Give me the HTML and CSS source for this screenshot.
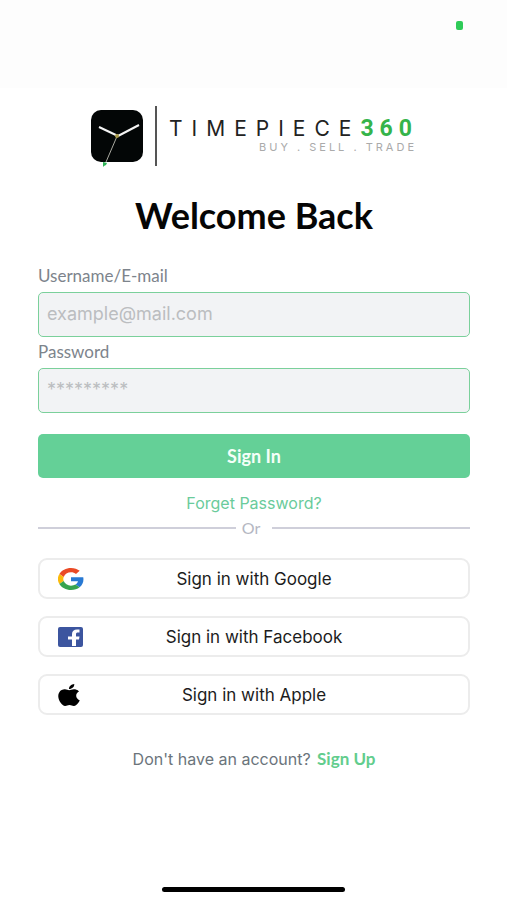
FILE: index.html
```html
<!DOCTYPE html>
<html lang="en">
<head>
<meta charset="utf-8">
<meta name="viewport" content="width=device-width, initial-scale=1">
<title>Timepiece360 – Sign In</title>
<link rel="stylesheet" href="styles.css">
</head>
<body>
<div class="status-bar"><span class="camera-dot"></span></div>
<main class="page">
  <div class="brand">
    <svg class="brand-mark" viewBox="0 0 54 62" aria-hidden="true">
      <rect x="1" y="5" width="52" height="52" rx="10" fill="#030606"/>
      <path d="M28 31 49 20" stroke="#f4f4f4" stroke-width="2"/>
      <path d="M28 31 9 22" stroke="#f4f4f4" stroke-width="2"/>
      <path d="M28 29 16 57" stroke="#a9a9a0" stroke-width="1"/>
      <circle cx="27" cy="31" r="2" fill="#a89a48"/>
      <path d="M13 57 17 58 16 60 14 61 13 62Z" fill="#2fb457"/>
    </svg>
    <span class="brand-rule"></span>
    <div class="brand-text">
      <div class="brand-name"><span>TIMEPIECE</span><b>360</b></div>
      <div class="brand-tag">BUY . SELL . TRADE</div>
    </div>
  </div>
  <h1 class="title">Welcome Back</h1>
  <form class="form">
    <label class="label" for="user">Username/E-mail</label>
    <input class="input" id="user" type="text" placeholder="example@mail.com">
    <label class="label" for="pass">Password</label>
    <input class="input" id="pass" type="password" placeholder="*********">
    <button class="submit" type="submit">Sign In</button>
  </form>
  <a class="forgot" href="#">Forget Password?</a>
  <div class="divider"><span>Or</span></div>
  <div class="social-list">
    <button class="social" type="button">
      <svg class="icon" viewBox="0 0 48 48" preserveAspectRatio="none" aria-hidden="true">
        <path fill="#ea4a25" d="M24 9.5c3.5 0 6.700 1.200 9.200 3.600l6.900-6.900C35.900 2.400 30.500 0 24 0 14.600 0 6.500 5.400 2.600 13.200l8 6.200C12.400 13.700 17.700 9.500 24 9.500z"/>
        <path fill="#2879d3" d="M47 24.500c0-1.600-.2-3.100-.4-4.500H24v9h12.900c-.6 3-2.200 5.500-4.700 7.200l7.700 6C44.400 38 47 31.800 47 24.500z"/>
        <path fill="#fbb90b" d="M10.500 28.600A14.500 14.500 0 0 1 10.500 19.400l-8-6.200a24 24 0 0 0 0 21.600z"/>
        <path fill="#36a34f" d="M24 48c6.500 0 11.900-2.100 15.900-5.800l-7.700-6c-2.200 1.500-4.900 2.300-8.200 2.300-6.300 0-11.600-4.200-13.500-9.900l-8 6.200C6.500 42.600 14.600 48 24 48z"/>
      </svg>
      <span>Sign in with Google</span>
    </button>
    <button class="social" type="button">
      <svg class="icon" viewBox="0 0 26 22" aria-hidden="true">
        <rect x="0" y="1" width="25" height="20" rx="2" fill="#3c559f"/>
        <path fill="#fff" d="M14 20V13.500H10V10.500H14V8C14 5 16 3.500 19 3.500H21.500V6.500H20C18.500 6.500 18 7 18 8.200V10.500H21.500L21 13.500H18V20Z"/>
      </svg>
      <span>Sign in with Facebook</span>
    </button>
    <button class="social" type="button">
      <svg class="icon icon-apple" viewBox="2 0 20 24" preserveAspectRatio="none" aria-hidden="true">
        <path d="M12.150 6.900c-.95 0-2.400-1.080-3.960-1.040-2.040.03-3.910 1.180-4.960 3.010-2.120 3.680-.55 9.100 1.520 12.090 1.010 1.450 2.210 3.090 3.790 3.040 1.520-.07 2.090-.99 3.930-.99 1.830 0 2.350.99 3.960.95 1.640-.03 2.680-1.480 3.680-2.950 1.160-1.690 1.640-3.320 1.660-3.410-.04-.01-3.180-1.220-3.220-4.860-.03-3.040 2.480-4.490 2.600-4.560-1.430-2.090-3.620-2.320-4.390-2.380-2-.16-3.680 1.090-4.610 1.090zM15.530 3.830c.84-1.010 1.400-2.430 1.250-3.830-1.210.05-2.660.8-3.530 1.820-.78.9-1.450 2.340-1.270 3.710 1.340.1 2.720-.69 3.560-1.700"/>
      </svg>
      <span>Sign in with Apple</span>
    </button>
  </div>
  <p class="signup">Don't have an account? <a href="#">Sign Up</a></p>
</main>
<div class="home-bar"></div>
</body>
</html>
```

FILE: styles.css
```css
* {
  box-sizing: border-box;
}

body {
  margin: 0;
  min-height: 100vh;
  display: flex;
  flex-direction: column;
  background: #fff;
  color: #111;
  font-family: Lato, "Open Sans", sans-serif;
}

.status-bar {
  height: 88px;
  padding: 21px 44px;
  display: flex;
  justify-content: flex-end;
  background: #fdfdfd;
}

.camera-dot {
  width: 7px;
  height: 9px;
  border-radius: 2px;
  background: #2fcb58;
}

.page {
  flex: 1;
  display: flex;
  flex-direction: column;
  padding: 17px 37px 0 38px;
}

.brand {
  display: flex;
  justify-content: center;
  height: 62px;
}

.brand-mark {
  width: 54px;
  height: 62px;
}

.brand-rule {
  width: 2px;
  height: 60px;
  margin: 1px 12px 0 11px;
  background: #555;
}

.brand-text {
  display: flex;
  flex-direction: column;
  align-items: flex-end;
  padding-top: 12px;
}

.brand-name {
  display: flex;
  align-items: center;
  height: 24px;
  color: #222;
  font-family: Inter, sans-serif;
  font-size: 21px;
  line-height: 24px;
  letter-spacing: 9px;
}

.brand-name b {
  color: #35b44a;
  font-family: "Liberation Sans Narrow", Roboto, sans-serif;
  font-size: 23px;
  letter-spacing: 6px;
}

.brand-tag {
  padding-right: 1px;
  color: #aaa;
  font-family: Inter, sans-serif;
  font-size: 11px;
  line-height: 12px;
  letter-spacing: 3px;
}

.title {
  margin: 28px 0 0;
  color: #050505;
  font-size: 36px;
  font-weight: 700;
  line-height: 40px;
  text-align: center;
}

.form {
  display: flex;
  flex-direction: column;
  margin-top: 32px;
}

.label {
  height: 25px;
  color: #7d848c;
  font-size: 17px;
  line-height: 18px;
}

.input {
  width: 100%;
  height: 45px;
  margin-bottom: 6px;
  padding: 0 8px 2px;
  border: 1px solid #7bd09b;
  border-radius: 5px;
  background: #f2f3f5;
  font-family: Inter, sans-serif;
  font-size: 18px;
}

.input::placeholder {
  color: #bbbdc0;
  opacity: 1;
}

.submit {
  height: 44px;
  margin-top: 15px;
  border: 0;
  border-radius: 5px;
  background: #64d097;
  color: #f4fff8;
  font-family: inherit;
  font-size: 18px;
  font-weight: 700;
}

.forgot {
  align-self: center;
  margin-top: 15px;
  color: #6acb9b;
  font-family: Inter, sans-serif;
  font-size: 16px;
  line-height: 20px;
  text-decoration: none;
}

.divider {
  display: flex;
  align-items: center;
  gap: 6px;
  margin-top: 5px;
  color: #b4b7c2;
  font-size: 16px;
  line-height: 20px;
}

.divider::before,
.divider::after {
  content: "";
  flex: 1;
  height: 2px;
  background: #cfcfda;
}

.divider::after {
  margin-left: 6px;
}

.social-list {
  display: flex;
  flex-direction: column;
  gap: 17px;
  margin-top: 20px;
}

.social {
  display: grid;
  grid-template-columns: 1fr auto 1fr;
  align-items: center;
  height: 41px;
  padding: 0 18px;
  border: 2px solid #ececec;
  border-radius: 9px;
  background: #fff;
  color: #1c1c1c;
  font-family: Inter, sans-serif;
  font-size: 17px;
}

.icon {
  width: 26px;
  height: 22px;
}

.icon-apple {
  width: 22px;
}

.signup {
  margin: 34px 0 0;
  color: #6b747b;
  font-family: Inter, sans-serif;
  font-size: 16px;
  line-height: 20px;
  text-align: center;
}

.signup a {
  margin-left: 2px;
  color: #62cd8d;
  font-family: Lato, sans-serif;
  font-size: 17px;
  font-weight: 700;
  text-decoration: none;
}

.home-bar {
  width: 36%;
  height: 5px;
  margin: 0 auto 8px;
  border-radius: 3px;
  background: #000;
}
```
